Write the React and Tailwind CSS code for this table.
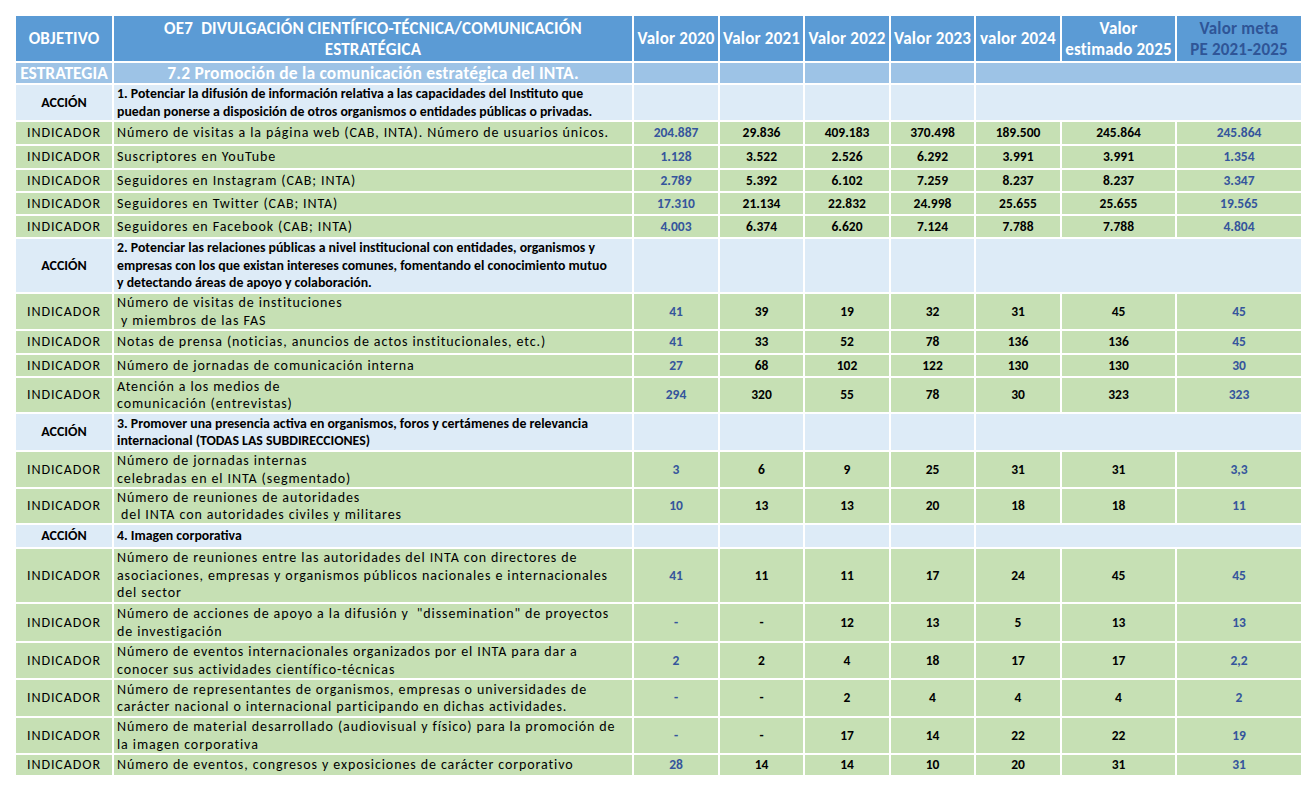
import React from 'react';

const COLS = 'grid grid-cols-[96px_518px_84px_83px_84px_83px_84px_113px_124px] gap-x-[2px]';

const rows = [
  {
    type: 'accion',
    h: 'h-[35px]',
    lines: [
      '1. Potenciar la difusión de información relativa a las capacidades del Instituto que',
      'puedan ponerse a disposición de otros organismos o entidades públicas o privadas.',
    ],
  },
  { type: 'ind', h: 'h-[22px]', lines: ['Número de visitas a la página web (CAB, INTA). Número de usuarios únicos.'], vals: ['204.887', '29.836', '409.183', '370.498', '189.500', '245.864', '245.864'] },
  { type: 'ind', h: 'h-[22px]', lines: ['Suscriptores en YouTube'], vals: ['1.128', '3.522', '2.526', '6.292', '3.991', '3.991', '1.354'] },
  { type: 'ind', h: 'h-[21px]', lines: ['Seguidores en Instagram (CAB; INTA)'], vals: ['2.789', '5.392', '6.102', '7.259', '8.237', '8.237', '3.347'] },
  { type: 'ind', h: 'h-[21px]', lines: ['Seguidores en Twitter (CAB; INTA)'], vals: ['17.310', '21.134', '22.832', '24.998', '25.655', '25.655', '19.565'] },
  { type: 'ind', h: 'h-[21px]', lines: ['Seguidores en Facebook (CAB; INTA)'], vals: ['4.003', '6.374', '6.620', '7.124', '7.788', '7.788', '4.804'] },
  {
    type: 'accion',
    h: 'h-[53px]',
    lines: [
      '2. Potenciar las relaciones públicas a nivel institucional con entidades, organismos y',
      'empresas con los que existan intereses comunes, fomentando el conocimiento mutuo',
      'y detectando áreas de apoyo y colaboración.',
    ],
  },
  { type: 'ind', h: 'h-[35px]', lines: ['Número de visitas de instituciones', '\u00a0y miembros de las FAS'], vals: ['41', '39', '19', '32', '31', '45', '45'] },
  { type: 'ind', h: 'h-[22px]', lines: ['Notas de prensa (noticias, anuncios de actos institucionales, etc.)'], vals: ['41', '33', '52', '78', '136', '136', '45'] },
  { type: 'ind', h: 'h-[21px]', lines: ['Número de jornadas de comunicación interna'], vals: ['27', '68', '102', '122', '130', '130', '30'] },
  { type: 'ind', h: 'h-[34px]', lines: ['Atención a los medios de', 'comunicación (entrevistas)'], vals: ['294', '320', '55', '78', '30', '323', '323'] },
  {
    type: 'accion',
    h: 'h-[36px]',
    lines: [
      '3. Promover una presencia activa en organismos, foros y certámenes de relevancia',
      'internacional (TODAS LAS SUBDIRECCIONES)',
    ],
  },
  { type: 'ind', h: 'h-[35px]', lines: ['Número de jornadas internas', 'celebradas en el INTA (segmentado)'], vals: ['3', '6', '9', '25', '31', '31', '3,3'] },
  { type: 'ind', h: 'h-[34px]', lines: ['Número de reuniones de autoridades', '\u00a0del INTA con autoridades civiles y militares'], vals: ['10', '13', '13', '20', '18', '18', '11'] },
  { type: 'accion', h: 'h-[22px]', lines: ['4. Imagen corporativa'] },
  {
    type: 'ind',
    h: 'h-[53px]',
    lines: [
      'Número de reuniones entre las autoridades del INTA con directores de',
      'asociaciones, empresas y organismos públicos nacionales e internacionales',
      'del sector',
    ],
    vals: ['41', '11', '11', '17', '24', '45', '45'],
  },
  { type: 'ind', h: 'h-[37px]', lines: ['Número de acciones de apoyo a la difusión y  "dissemination" de proyectos', 'de investigación'], vals: ['-', '-', '12', '13', '5', '13', '13'] },
  { type: 'ind', h: 'h-[35px]', lines: ['Número de eventos internacionales organizados por el INTA para dar a', 'conocer sus actividades científico-técnicas'], vals: ['2', '2', '4', '18', '17', '17', '2,2'] },
  { type: 'ind', h: 'h-[36px]', lines: ['Número de representantes de organismos, empresas o universidades de', 'carácter nacional o internacional participando en dichas actividades.'], vals: ['-', '-', '2', '4', '4', '4', '2'] },
  { type: 'ind', h: 'h-[35px]', lines: ['Número de material desarrollado (audiovisual y físico) para la promoción de', 'la imagen corporativa'], vals: ['-', '-', '17', '14', '22', '22', '19'] },
  { type: 'ind', h: 'h-[20px]', lines: ['Número de eventos, congresos y exposiciones de carácter corporativo'], vals: ['28', '14', '14', '10', '20', '31', '31'] },
];

function HeaderCell({ children, className = '' }) {
  return (
    <div className={`bg-[#5b9bd5] flex items-center justify-center text-center font-bold text-[17px] tracking-[0.2px] leading-[21px] whitespace-nowrap ${className}`}>
      {children}
    </div>
  );
}

function AccionRow({ row }) {
  return (
    <div className={`${COLS} ${row.h}`}>
      <div className="bg-[#ddebf7] flex items-center justify-center font-bold text-[14px] leading-[18px] text-black">ACCIÓN</div>
      <div className="bg-[#ddebf7] flex flex-col justify-center pl-[3px] font-bold text-[13.8px] leading-[17.5px] text-black whitespace-nowrap overflow-hidden">
        {row.lines.map((l, i) => (
          <span key={i}>{l}</span>
        ))}
      </div>
      <div className="bg-[#ddebf7]" />
      <div className="bg-[#ddebf7]" />
      <div className="bg-[#ddebf7]" />
      <div className="bg-[#ddebf7]" />
      <div className="bg-[#ddebf7] col-span-3" />
    </div>
  );
}

function IndicadorRow({ row }) {
  return (
    <div className={`${COLS} ${row.h}`}>
      <div className="bg-[#c6e0b4] flex items-center justify-center text-[14px] leading-[18px] tracking-[0.9px] text-black">INDICADOR</div>
      <div className="bg-[#c6e0b4] flex flex-col justify-center pl-[3px] text-[14px] leading-[17.5px] tracking-[0.9px] text-black whitespace-pre overflow-hidden">
        {row.lines.map((l, i) => (
          <span key={i}>{l}</span>
        ))}
      </div>
      {row.vals.map((v, i) => (
        <div
          key={i}
          className={`bg-[#c6e0b4] flex items-center justify-center font-bold text-[13.5px] leading-[18px] ${
            i === 0 || i === 6 ? 'text-[#35559c]' : 'text-black'
          }`}
        >
          {v}
        </div>
      ))}
    </div>
  );
}

export default function App() {
  return (
    <div className="min-h-screen bg-white pt-[16px] pl-[16px] font-['Carlito','Lato',sans-serif]">
      <div className="flex flex-col gap-y-[2px] w-[1285px]">
        {/* cabecera */}
        <div className={`${COLS} h-[45px] text-white`}>
          <HeaderCell>OBJETIVO</HeaderCell>
          <HeaderCell className="flex-col">
            <span>OE7&nbsp; DIVULGACIÓN CIENTÍFICO-TÉCNICA/COMUNICACIÓN</span>
            <span>ESTRATÉGICA</span>
          </HeaderCell>
          <HeaderCell>Valor 2020</HeaderCell>
          <HeaderCell>Valor 2021</HeaderCell>
          <HeaderCell>Valor 2022</HeaderCell>
          <HeaderCell>Valor 2023</HeaderCell>
          <HeaderCell>valor 2024</HeaderCell>
          <HeaderCell className="flex-col">
            <span>Valor</span>
            <span>estimado 2025</span>
          </HeaderCell>
          <HeaderCell className="flex-col text-[#2f5597]">
            <span>Valor meta</span>
            <span>PE 2021-2025</span>
          </HeaderCell>
        </div>

        {/* estrategia */}
        <div className={`${COLS} h-[20px] text-white`}>
          <div className="bg-[#9dc3e6] flex items-center justify-center font-bold text-[17.5px] leading-[20px] whitespace-nowrap">ESTRATEGIA</div>
          <div className="bg-[#9dc3e6] flex items-center justify-center font-bold text-[17.5px] leading-[20px] tracking-[0.2px] whitespace-nowrap">
            7.2 Promoción de la comunicación estratégica del INTA.
          </div>
          <div className="bg-[#9dc3e6]" />
          <div className="bg-[#9dc3e6]" />
          <div className="bg-[#9dc3e6]" />
          <div className="bg-[#9dc3e6]" />
          <div className="bg-[#9dc3e6] col-span-3" />
        </div>

        {rows.map((row, i) =>
          row.type === 'accion' ? <AccionRow key={i} row={row} /> : <IndicadorRow key={i} row={row} />
        )}
      </div>
    </div>
  );
}
